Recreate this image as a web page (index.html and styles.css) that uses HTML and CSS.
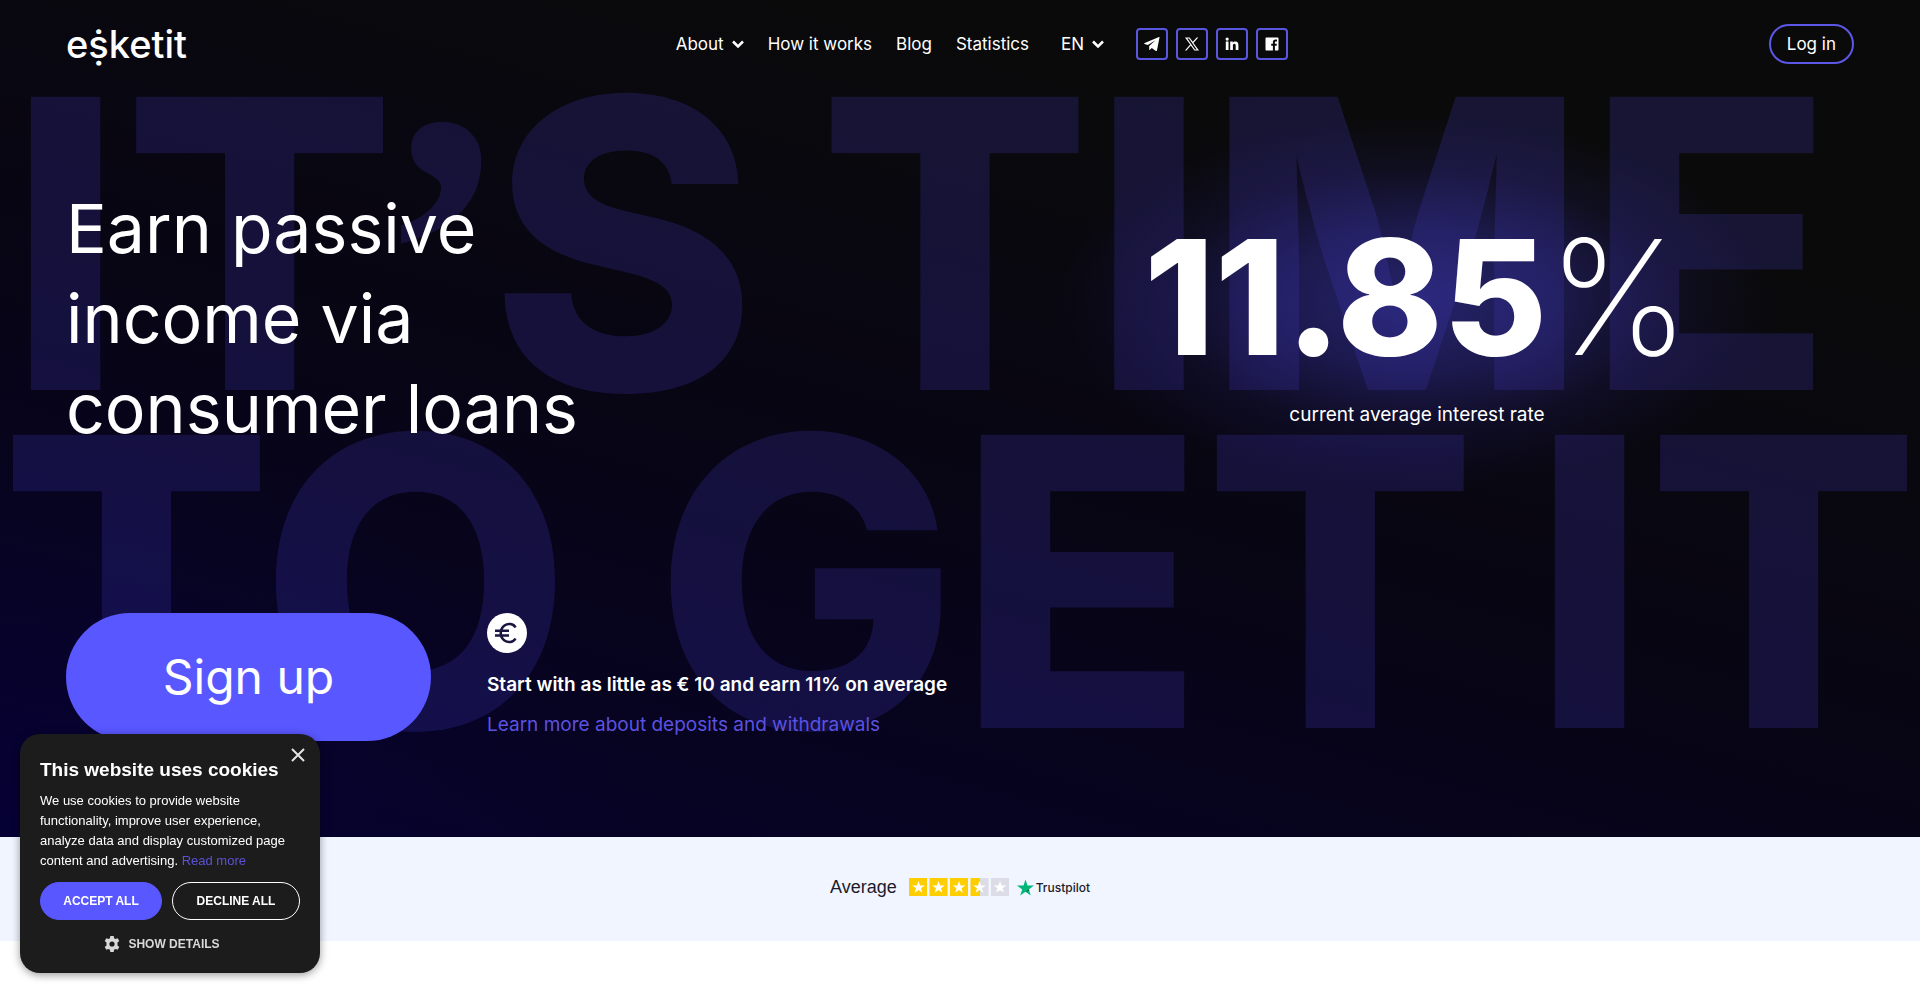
FILE: index.html
```html
<!DOCTYPE html>
<html lang="en">
<head>
<meta charset="utf-8">
<meta name="viewport" content="width=device-width, initial-scale=1">
<title>Esketit</title>
<link rel="stylesheet" href="styles.css">
</head>
<body>
<div class="hero">
  <div class="backdrop" aria-hidden="true">
    <div class="backdrop-line"><span>IT<span class="backdrop-quote">’</span>S</span><span>TIME</span></div>
    <div class="backdrop-line backdrop-line-wide"><span class="backdrop-lead">TO</span><span>GET</span><span>IT</span></div>
  </div>

  <header class="header">
    <a class="logo" href="#" aria-label="esketit">eṩketit</a>
    <nav class="nav" aria-label="Main">
      <div class="nav-links">
        <button class="nav-item" type="button">About
          <svg class="chevron" viewBox="0 0 12 8" aria-hidden="true"><path d="M1 1.500 6 6.500l5-5"/></svg>
        </button>
        <a class="nav-item" href="#">How it works</a>
        <a class="nav-item" href="#">Blog</a>
        <a class="nav-item" href="#">Statistics</a>
      </div>
      <button class="nav-item" type="button">EN
        <svg class="chevron" viewBox="0 0 12 8" aria-hidden="true"><path d="M1 1.500 6 6.500l5-5"/></svg>
      </button>
      <div class="socials">
        <a class="social" href="#" aria-label="Telegram"><svg viewBox="0 0 16 16"><path d="M15.500 1.500 13 14.200c-.2.900-.8 1-1.500.6L7.800 12l-1.900 1.800c-.4.300-.7.200-.7-.3V10l6.300-5.800L3.800 9 .6 8c-.7-.3-.7-.8.100-1.100l13.700-5.700c.6-.2 1.200 0 1.100.3z"/></svg></a>
        <a class="social" href="#" aria-label="X"><svg viewBox="0 0 16 16"><path fill-rule="evenodd" d="M1 1.500h4.600l3.200 4.300 3.900-4.300h1.600L9.400 6.900 15 14.500h-4.600L6.800 9.600l-4.300 4.900H.9l5.300-6zM3.300 2.600l7.700 10.800h1.700L5 2.600z"/></svg></a>
        <a class="social" href="#" aria-label="LinkedIn"><svg viewBox="0 0 16 16"><path d="M1.800 5.600h2.700V14H1.800zM3.150 1.500a1.600 1.600 0 1 1 0 3.200 1.600 1.600 0 0 1 0-3.200zM6.200 5.600h2.600v1.200c.5-.9 1.400-1.400 2.500-1.400 2.500 0 3.100 1.600 3.100 3.900V14h-2.700V9.900c0-1.200-.1-2.200-1.300-2.200-1.200 0-1.500 1-1.500 2.100V14H6.200z"/></svg></a>
        <a class="social" href="#" aria-label="Facebook"><svg viewBox="0 0 16 16"><path d="M2.500 1.500h11c.6 0 1 .4 1 1v11c0 .6-.4 1-1 1h-2.600V9.700h1.700l.3-2h-2V6.500c0-.6.200-1 1-1h1.100V3.700c-.3 0-.8-.1-1.500-.1-1.600 0-2.600.9-2.600 2.600v1.500H7.200v2h1.700v4.800H2.500c-.6 0-1-.4-1-1v-11c0-.6.4-1 1-1z"/></svg></a>
      </div>
    </nav>
    <a class="login" href="#">Log in</a>
  </header>

  <main class="hero-main">
    <section class="pitch">
      <h1 class="headline">Earn passive income via consumer loans</h1>
      <div class="actions">
        <a class="signup" href="#">Sign up</a>
        <div class="deposit">
          <svg class="euro" viewBox="0 0 40 40" aria-hidden="true"><circle cx="20" cy="20" r="20" fill="#fff"/><path d="M28.500 14.500C26.500 10.500 21 10 17.500 12.500c-5 3.600-5 11.400 0 15 3.500 2.500 9 2 11-2M8 17.800h14M8 22.500h14" fill="none" stroke="#1a1640" stroke-width="2.600"/></svg>
          <p class="deposit-title">Start with as little as € 10 and earn 11% on average</p>
          <a class="deposit-link" href="#">Learn more about deposits and withdrawals</a>
        </div>
      </div>
    </section>
    <section class="rate">
      <p class="rate-value">11.85<span class="rate-unit">%</span></p>
      <p class="rate-label">current average interest rate</p>
    </section>
  </main>
</div>

<section class="reviews" aria-label="Trustpilot rating">
  <span class="reviews-label">Average</span>
  <svg class="stars" viewBox="0 0 100 18" role="img" aria-label="3.5 out of 5 stars">
    <defs><path id="star" d="m0-6.500 1.600 4.400h4.700L2.500.7 3.900 5.300 0 2.500l-3.900 2.800L-2.500.7l-3.800-2.800h4.700z"/></defs>
    <g fill="#ffce00"><path d="M0 0h18v18H0zM20.500 0h18v18h-18zM41 0h18v18H41zM61.500 0H71v18h-9.500z"/></g>
    <g fill="#dcdce6"><path d="M71 0h8.500v18H71zM82 0h18v18H82z"/></g>
    <g fill="#fff"><use href="#star" x="9.500" y="9.500"/><use href="#star" x="29.500" y="9.500"/><use href="#star" x="50" y="9.500"/><use href="#star" x="70.500" y="9.500"/><use href="#star" x="91" y="9.500"/></g>
  </svg>
  <a class="trustpilot" href="#"><svg viewBox="0 0 17 17" aria-hidden="true"><path fill="#00b67a" d="m8.500.5 2 6.100H17l-5.200 3.800 2 6.100-5.300-3.800-5.300 3.800 2-6.100L0 6.600h6.500z"/><path fill="#005128" d="m12.300 11.800-.5-1.400-3.300 2.300z"/></svg>Trustpilot</a>
</section>

<aside class="cookies" role="dialog" aria-labelledby="cookies-title">
  <button class="cookies-close" type="button" aria-label="Close"><svg viewBox="0 0 14 14"><path d="m1 1 12 12M13 1 1 13"/></svg></button>
  <h2 class="cookies-title" id="cookies-title">This website uses cookies</h2>
  <p class="cookies-text">We use cookies to provide website functionality, improve user experience, analyze data and display customized page content and advertising. <a href="#">Read more</a></p>
  <div class="cookies-actions">
    <button class="cookies-button cookies-accept" type="button">ACCEPT ALL</button>
    <button class="cookies-button cookies-decline" type="button">DECLINE ALL</button>
  </div>
  <button class="cookies-details" type="button"><svg viewBox="0 0 16 16" aria-hidden="true"><path fill-rule="evenodd" d="M6.300 0h3.400l.4 2.300 1.300.7 2.200-.8 1.700 2.900-1.800 1.500v2.800l1.800 1.500-1.700 2.900-2.200-.8-1.300.7-.4 2.300H6.300l-.4-2.300-1.300-.7-2.200.8-1.700-2.900 1.800-1.500V6.600L.7 5.100l1.700-2.900 2.200.8 1.300-.7zM8 5.400a2.600 2.600 0 1 0 0 5.200 2.600 2.600 0 0 0 0-5.200z"/></svg>SHOW DETAILS</button>
</aside>
</body>
</html>
```
FILE: styles.css
```css
* { box-sizing: border-box; }

body {
  margin: 0;
  background: #fff;
  color: #fff;
  font-family: Inter, "Open Sans", sans-serif;
  font-size: 17px;
}

h1, h2, p { margin: 0; }

a { color: inherit; text-decoration: none; }

button {
  margin: 0;
  padding: 0;
  border: 0;
  background: none;
  color: inherit;
  font: inherit;
  cursor: pointer;
}

.hero {
  position: relative;
  overflow: hidden;
  padding-bottom: 96px;
  background:
    radial-gradient(ellipse 640px 400px at 0% 100%, rgba(6, 0, 66, 0.4), transparent),
    linear-gradient(195deg, #0a0a0a 20%, #080514 55%, #06022c 100%);
}

.backdrop {
  position: absolute;
  inset: 0;
  padding-top: 74px;
  color: rgba(89, 80, 255, 0.17);
  font-size: 21vw;
  font-weight: 800;
  line-height: 338px;
  white-space: nowrap;
}

.backdrop-line {
  display: flex;
  gap: 62px;
  padding-left: 8px;
}

.backdrop-line-wide {
  gap: 0;
  justify-content: space-between;
  padding-left: 0;
}

.backdrop-lead { margin-right: 28px; }

.backdrop-quote {
  margin: 0 -20px;
  font-family: "Liberation Serif", serif;
  font-weight: 700;
  line-height: 0;
}

.header {
  position: relative;
  display: flex;
  align-items: center;
  justify-content: space-between;
  padding: 24px 66px;
}

.logo {
  font-size: 38px;
  font-weight: 500;
  line-height: 40px;
}

.nav {
  display: flex;
  align-items: center;
  gap: 32px;
  padding-left: 8px;
}

.nav-links { display: flex; gap: 24px; }

.nav-item {
  display: flex;
  align-items: center;
  gap: 8px;
  line-height: 24px;
}

.chevron {
  width: 12px;
  height: 8px;
  fill: none;
  stroke: #fff;
  stroke-width: 2.5;
}

.socials { display: flex; gap: 8px; }

.social {
  display: flex;
  align-items: center;
  justify-content: center;
  width: 32px;
  height: 32px;
  border: 2px solid #5957e0;
  border-radius: 4px;
}

.social svg { width: 16px; height: 16px; fill: #fff; }

.login {
  padding: 6px 16px;
  border: 2px solid #5d57e8;
  border-radius: 20px;
  line-height: 24px;
}

.hero-main {
  position: relative;
  display: grid;
  grid-template-columns: 1fr 874px;
  padding: 95px 66px 0;
}

.headline {
  max-width: 560px;
  font-size: 68px;
  font-weight: 400;
  line-height: 90px;
}

.actions {
  display: flex;
  align-items: flex-start;
  gap: 56px;
  margin-top: 160px;
}

.signup {
  width: 365px;
  padding: 32px 0;
  border-radius: 64px;
  background: #5957ff;
  font-size: 48px;
  line-height: 64px;
  text-align: center;
}

.deposit {
  display: flex;
  flex-direction: column;
  align-items: flex-start;
  font-size: 19px;
  line-height: 24px;
  white-space: nowrap;
}

.euro { width: 40px; height: 40px; }

.deposit-title { margin: 20px 0 16px; font-weight: 600; }

.deposit-link { color: #5b52e0; }

.rate {
  position: relative;
  display: flex;
  flex-direction: column;
  align-items: center;
  align-self: start;
  padding-top: 14px;
}

.rate::before {
  content: "";
  position: absolute;
  inset: -70px 80px -60px 80px;
  background: radial-gradient(closest-side, rgba(66, 62, 200, 0.5), rgba(62, 56, 190, 0.36) 38%, rgba(56, 50, 180, 0.12) 70%, transparent);
}

.rate-value {
  position: relative;
  font-size: 160px;
  font-weight: 800;
  line-height: 200px;
}

.rate-unit { font-weight: 200; }

.rate-label {
  position: relative;
  margin-top: 6px;
  font-size: 19px;
  line-height: 24px;
}

.reviews {
  display: flex;
  align-items: center;
  justify-content: center;
  padding: 38px 0 42px;
  background: #f0f5ff;
  color: #1b1b2b;
}

.reviews-label {
  margin-right: 12px;
  font-family: "Liberation Sans", Arial, sans-serif;
  font-size: 18px;
  line-height: 24px;
}

.stars { width: 100px; height: 18px; margin-right: 8px; }

.trustpilot {
  display: flex;
  align-items: center;
  gap: 2px;
  font-size: 12px;
  font-weight: 500;
}

.trustpilot svg { width: 17px; height: 17px; }

.cookies {
  position: fixed;
  left: 20px;
  bottom: 20px;
  width: 300px;
  padding: 24px 20px 17px;
  border-radius: 20px;
  background: #1c1c1c;
  box-shadow: 0 2px 8px rgba(0, 0, 0, 0.4);
  font-family: "Liberation Sans", Arial, sans-serif;
  font-size: 13px;
}

.cookies-close {
  position: absolute;
  top: 14px;
  right: 15px;
  width: 14px;
  height: 14px;
}

.cookies-close svg {
  display: block;
  fill: none;
  stroke: #e4e4e4;
  stroke-width: 2;
}

.cookies-title { font-size: 19px; line-height: 24px; }

.cookies-text { margin: 9px 0 11px; line-height: 20px; }

.cookies-text a { color: #5b52d8; }

.cookies-actions { display: flex; gap: 10px; }

.cookies-button {
  border: 1px solid #5957ff;
  border-radius: 19px;
  font-size: 12px;
  font-weight: 700;
  line-height: 36px;
}

.cookies-accept { width: 122px; background: #5957ff; }

.cookies-decline { flex: 1; border-color: #fff; }

.cookies-details {
  display: flex;
  align-items: center;
  gap: 8px;
  margin: 12px auto 0;
  padding-right: 16px;
  color: #d8d8d8;
  font-size: 12px;
  font-weight: 700;
  line-height: 24px;
}

.cookies-details svg { width: 16px; height: 16px; fill: currentColor; }
```
